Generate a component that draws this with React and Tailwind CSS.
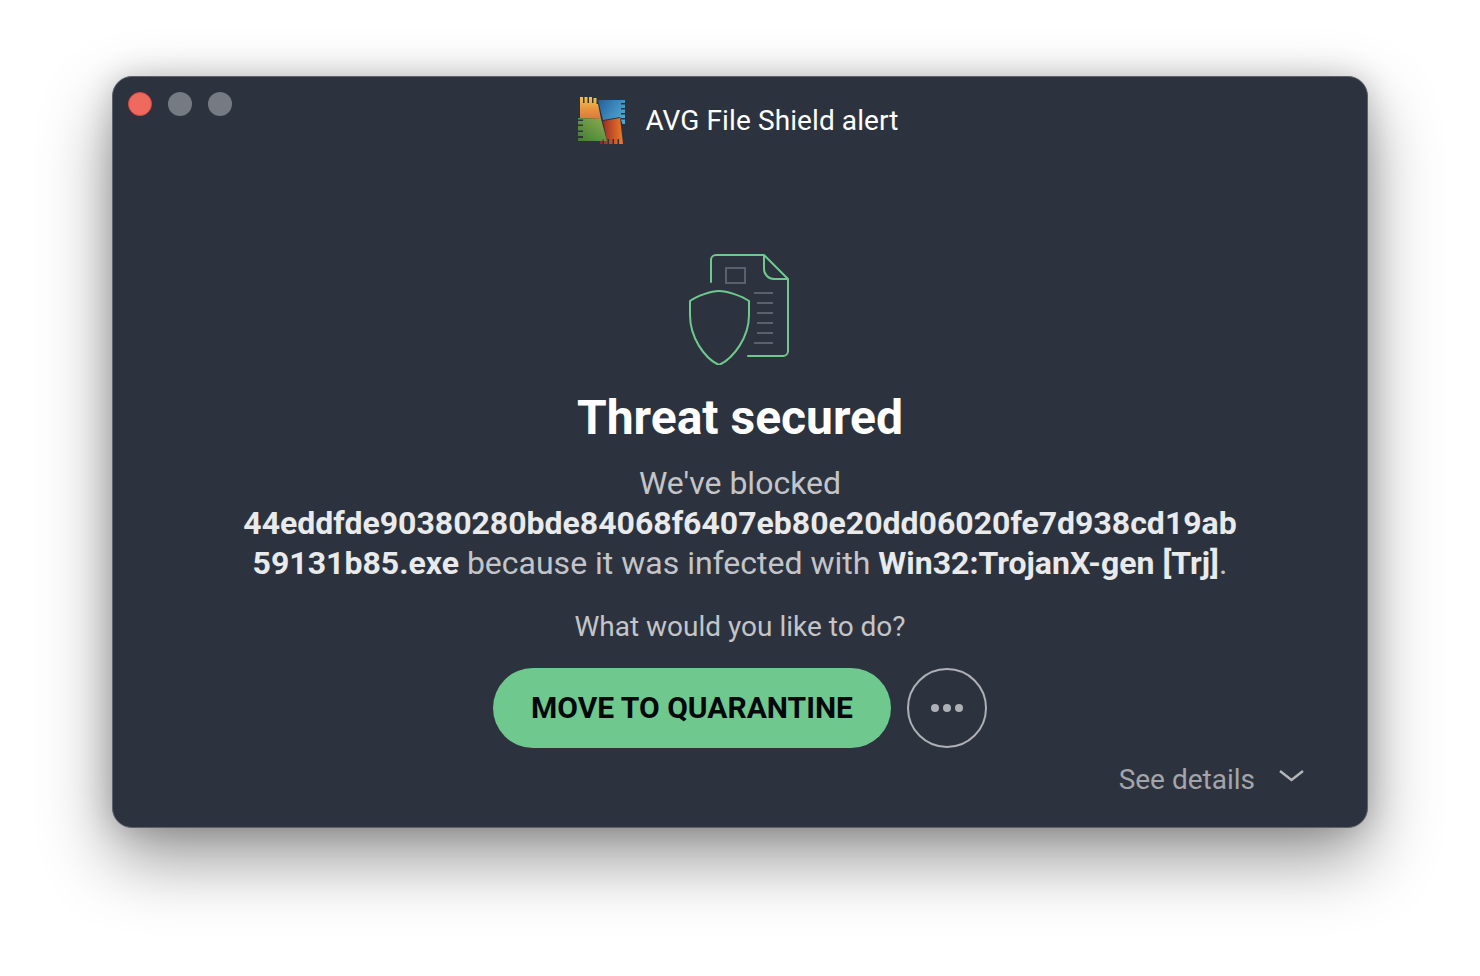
import React from "react";

// AVG logo, four coloured combs
function AvgLogo() {
  return (
    <svg width="50" height="50" viewBox="0 0 50 50" className="shrink-0">
      <defs>
        <linearGradient id="avgOrange" x1="0" y1="0" x2="0" y2="1">
          <stop offset="0" stopColor="#f3c548" />
          <stop offset="0.55" stopColor="#e8933f" />
          <stop offset="1" stopColor="#d9793c" />
        </linearGradient>
        <linearGradient id="avgBlue" x1="0" y1="0" x2="1" y2="0.6">
          <stop offset="0" stopColor="#235f9c" />
          <stop offset="1" stopColor="#4fa6d0" />
        </linearGradient>
        <linearGradient id="avgGreen" x1="0" y1="1" x2="1" y2="0">
          <stop offset="0" stopColor="#3f7d3a" />
          <stop offset="1" stopColor="#8fae4c" />
        </linearGradient>
        <linearGradient id="avgRed" x1="0" y1="0" x2="1" y2="0">
          <stop offset="0" stopColor="#8e2425" />
          <stop offset="1" stopColor="#f27a28" />
        </linearGradient>
      </defs>
      <path d="M3 1h3v6h1.500V1h3v6h1.500V1h3v6h1.500V2h3v6h1.500L24 23 3 22z" fill="url(#avgOrange)" />
      <path d="M21 4h27v3h-4v1.500h4v3.500h-4v1.500h4v3.500h-4v1.500h4v3.500h-4v1.500h4V28h-2.500l-2.500-7-17 3z" fill="url(#avgBlue)" />
      <path d="M1 22l23 1 6 22H1v-3h5v-2H1v-4h5v-1.500H1V30h5v-1.500H1V25h5v-1.500H1z" fill="url(#avgGreen)" />
      <path d="M26 25l17-3 3 26h-4v-5h-1.500v5h-3.500v-5h-1.500v5h-3.500v-5h-1.500v5h-3.500v-5h-1.500v5H23v-3h7z" fill="url(#avgRed)" />
    </svg>
  );
}

function ThreatIcon() {
  return (
    <svg width="102" height="114" viewBox="0 0 102 114" fill="none" className="shrink-0">
      {/* document outline */}
      <path d="M24 31V9a5 5 0 0 1 5-5h48l24 24v72a5 5 0 0 1-5 5H61" stroke="#6fc98e" strokeWidth="2" strokeLinecap="round" strokeLinejoin="round" />
      <path d="M77 4v14a10 10 0 0 0 10 10h14" stroke="#6fc98e" strokeWidth="2" strokeLinejoin="round" />
      {/* shield */}
      <path d="M32 40c-8 0-22 5-29 10v14c0 22 14 43 29 50 15-7 30-28 30-50V50c-7-5-22-10-30-10z" stroke="#6fc98e" strokeWidth="2" strokeLinejoin="round" />
      {/* picture box and text lines */}
      <rect x="39" y="17" width="19" height="15" stroke="#5c606b" strokeWidth="2" />
      <g stroke="#5c606b" strokeWidth="2">
        <path d="M67 42h19M70 52h16M70 62h16M70 72h16M70 82h16M67 92h19" />
      </g>
    </svg>
  );
}

export default function App() {
  return (
    <div
      className="w-[1480px] h-[976px] bg-white overflow-hidden flex justify-center items-start pt-[76px]"
      style={{ fontFamily: "Roboto, sans-serif" }}
    >
      <div className="w-[1256px] h-[752px] bg-[#2d333e] rounded-[20px] border border-[#5f626b] shadow-[0_30px_70px_rgba(0,0,0,0.42),0_0_30px_rgba(0,0,0,0.18)] relative flex flex-col items-center">
        {/* traffic lights */}
        <div className="absolute left-[15px] top-[15px] flex gap-[16px]">
          <span className="w-[24px] h-[24px] rounded-full bg-[#ee6a5f] border border-[#e0443e]" />
          <span className="w-[24px] h-[24px] rounded-full bg-[#767a83]" />
          <span className="w-[24px] h-[24px] rounded-full bg-[#767a83]" />
        </div>

        {/* title */}
        <div className="flex items-center mt-[19px] h-[50px] gap-[18px] ml-[-4px]">
          <AvgLogo />
          <span className="text-[28px] leading-[50px] tracking-[0.1px] text-white">AVG File Shield alert</span>
        </div>

        <div className="mt-[105px] ml-[-4px]">
          <ThreatIcon />
        </div>

        <h1 className="mt-[25px] text-[48px] leading-[56px] font-bold text-white">Threat secured</h1>

        <div className="mt-[17px] w-[1040px] text-center text-[32px] leading-[40px] text-[#c3c5c9]">
          <div>We've blocked</div>
          <div className="font-bold text-[#e9eaec]">44eddfde90380280bde84068f6407eb80e20dd06020fe7d938cd19ab</div>
          <div>
            <span className="font-bold text-[#e9eaec]">59131b85.exe</span> because it was infected with{" "}
            <span className="font-bold text-[#e9eaec]">Win32:TrojanX-gen [Trj]</span>.
          </div>
        </div>

        <p className="mt-[24px] text-[28px] leading-[40px] text-[#c3c5c9]">What would you like to do?</p>

        <div className="mt-[21px] flex items-center gap-[16px]">
          <button className="w-[398px] h-[80px] pb-[2px] rounded-full bg-[#6fc98e] text-[#05070a] text-[30px] font-bold">
            MOVE TO QUARANTINE
          </button>
          <button className="w-[80px] h-[80px] rounded-full border-2 border-[#aeb0b5] flex items-center justify-center gap-[4px]">
            <span className="w-[8px] h-[8px] rounded-full bg-[#aeb0b5]" />
            <span className="w-[8px] h-[8px] rounded-full bg-[#aeb0b5]" />
            <span className="w-[8px] h-[8px] rounded-full bg-[#aeb0b5]" />
          </button>
        </div>

        <div className="self-end mr-[63px] mt-[12px] flex items-center gap-[24px] text-[28px] leading-[40px] text-[#a3a5ab]">
          <span>See details</span>
          <svg width="25" height="14" viewBox="0 0 25 14" fill="none" className="mt-[-8px]">
            <path d="M1 2l11.5 9L24 2" stroke="#b4b6ba" strokeWidth="2.4" />
          </svg>
        </div>
      </div>
    </div>
  );
}
